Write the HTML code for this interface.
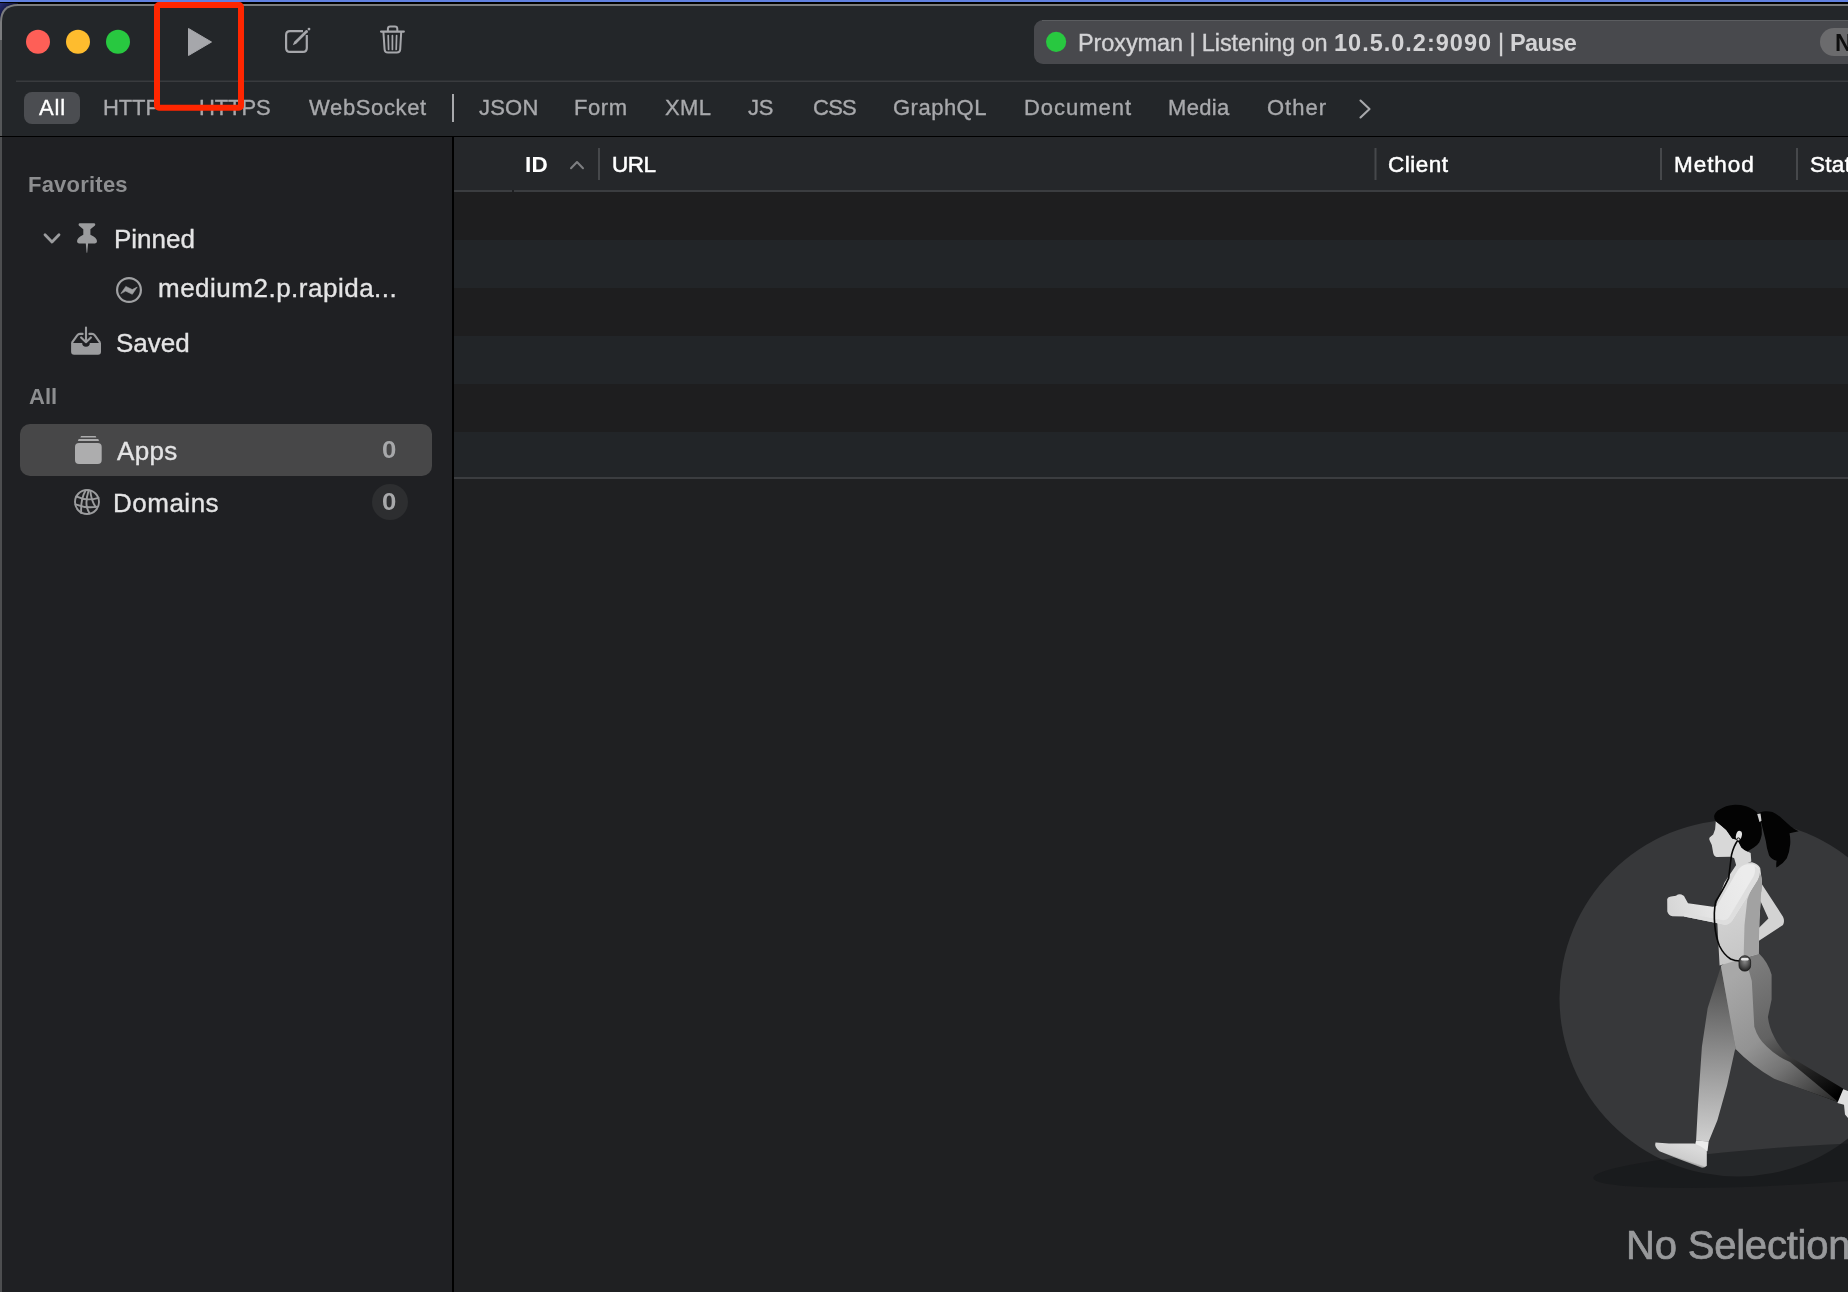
<!DOCTYPE html>
<html><head><meta charset="utf-8">
<style>
html,body{margin:0;padding:0;}
body{width:1848px;height:1292px;overflow:hidden;position:relative;background:#0b0d24;font-family:"Liberation Sans",sans-serif;}
.full{position:absolute;left:0;top:0;}
.t{position:absolute;white-space:nowrap;will-change:transform;}
</style></head>
<body>

<svg class="full" width="1848" height="1292" viewBox="0 0 1848 1292">
 <!-- desktop strip + window frame -->
 <rect x="0" y="0" width="1848" height="2" fill="#6080e0"/>
 <rect x="0" y="2" width="1848" height="3" fill="#000"/>
 <defs><linearGradient id="gCorner" x1="0" y1="4" x2="12" y2="16" gradientUnits="userSpaceOnUse"><stop offset="0" stop-color="#262c70"/><stop offset="0.6" stop-color="#10133a"/><stop offset="1" stop-color="#000"/></linearGradient></defs>
 <rect x="0" y="3" width="18" height="20" fill="url(#gCorner)"/>
 <path d="M0,1292 V22 Q0,4 18,4 H1848 V1292 Z" fill="#7b7c7e"/>
 <path d="M2,1292 V22 Q2,6 18,6 H1848 V1292 Z" fill="#232629"/>
 <rect x="0" y="40" width="2" height="1252" fill="#555759"/>
 <!-- traffic lights -->
 <circle cx="38" cy="41.8" r="12" fill="#fe5f57"/>
 <circle cx="78" cy="41.8" r="12" fill="#febc2e"/>
 <circle cx="118" cy="41.8" r="12" fill="#28c840"/>
 <!-- play -->
 <path d="M188.5,28.5 L211.5,42 L188.5,55.5 Z" fill="#a6a7ab" stroke="#a6a7ab" stroke-width="1" stroke-linejoin="round"/>
 <!-- edit -->
 <path d="M303,31.2 H290 Q286.1,31.2 286.1,35.1 V47.9 Q286.1,51.8 290,51.8 H302.9 Q306.8,51.8 306.8,47.9 V35" fill="none" stroke="#a6a7ab" stroke-width="2.2"/>
 <path d="M292.8,45.2 L294.2,41.8 L305.8,30.2 Q306.7,29.6 307.6,30.4 Q308.3,31.3 307.7,32.2 L296.2,43.8 Z" fill="#a6a7ab"/>
 <circle cx="309" cy="29.1" r="1.4" fill="#a6a7ab"/>
 <!-- trash -->
 <path d="M381,31.6 H403.9" stroke="#a6a7ab" stroke-width="2.1" stroke-linecap="round"/>
 <path d="M387.9,31.6 V28.8 Q387.9,26.4 390.3,26.4 H394.9 Q397.3,26.4 397.3,28.8 V31.6" fill="none" stroke="#a6a7ab" stroke-width="2"/>
 <path d="M383.4,32 L384.6,49.5 Q384.8,52.6 388,52.6 H396.8 Q400,52.6 400.2,49.5 L401.2,32" fill="none" stroke="#a6a7ab" stroke-width="2"/>
 <path d="M388.2,35.5 L388.6,49.5 M392.4,35.5 V49.5 M396.6,35.5 L396.2,49.5" stroke="#a6a7ab" stroke-width="1.7" stroke-linecap="round"/>
 <!-- toolbar separator -->
 <rect x="16" y="80.5" width="1832" height="1.5" fill="#393b3e"/>
 <!-- All pill -->
 <rect x="24" y="92" width="56" height="32" rx="8" fill="#4b4d51"/>
 <!-- vertical bar -->
 <rect x="452" y="94" width="2" height="28" fill="#a8a9ac"/>
 <!-- chevron right -->
 <path d="M1360.5,100.5 L1369.5,109 L1360.5,117.5" fill="none" stroke="#a8a9ac" stroke-width="2.1" stroke-linecap="round" stroke-linejoin="round"/>
 <!-- status pill -->
 <rect x="1034" y="20" width="900" height="44" rx="9" fill="#48494d"/>
 <rect x="1042" y="20" width="806" height="1" fill="#5b5d60"/>
 <circle cx="1056.1" cy="41.8" r="10.1" fill="#28c840"/>
 <rect x="1820" y="28" width="80" height="28" rx="14" fill="#6b6b6d"/>
 <!-- toolbar bottom black line -->
 <rect x="0" y="136" width="1848" height="1" fill="#000"/>
 <!-- sidebar -->
 <rect x="2" y="137" width="450" height="1155" fill="#1f2023"/>
 <rect x="0" y="137" width="2" height="1155" fill="#4d4e50"/>
 <rect x="452" y="137" width="2" height="1155" fill="#000"/>
 <!-- chevron down -->
 <path d="M45,234.8 L52,242 L59,234.8" fill="none" stroke="#9b9c9e" stroke-width="2.8" stroke-linecap="round" stroke-linejoin="round"/>
 <!-- pin -->
 <path d="M79.5,223.3 H94.3 Q96,223.5 95,225.6 L90.4,229.2 V234.7 Q96.9,237.6 97,241.3 Q97,243.4 95,243.4 H88.1 L87.2,252.7 H86.6 L85.8,243.4 H79 Q77,243.4 77,241.3 Q77.2,237.6 83.3,234.7 V229.2 L78.8,225.6 Q78,223.5 79.5,223.3 Z" fill="#9b9c9e"/>
 <!-- circle wave -->
 <circle cx="129" cy="290" r="11.9" fill="none" stroke="#a0a1a3" stroke-width="2.2"/>
 <path d="M120.9,293.6 L125.8,286.4 L132.3,289.6 L137.2,287.1 L132.3,294.3 L125.7,291.1 Z" fill="#a0a1a3" stroke="#a0a1a3" stroke-width="0.6" stroke-linejoin="round"/>
 <!-- saved tray -->
 <path d="M86,327.5 V341.5 M81.1,337.4 L86,342.2 L90.9,337.4" fill="none" stroke="#9b9c9e" stroke-width="2.1" stroke-linecap="round" stroke-linejoin="round"/>
 <path d="M82.6,333.9 H80 Q78.3,333.9 77.2,335.3 L72.2,342.4 M89.4,333.9 H92 Q93.7,333.9 94.8,335.3 L99.8,342.4" fill="none" stroke="#9b9c9e" stroke-width="2.1" stroke-linecap="round"/>
 <path d="M71.1,342.9 H82.2 A3.8,3.8 0 0 0 89.8,342.9 H101 V351.8 Q101,354.8 98,354.8 H74.1 Q71.1,354.8 71.1,351.8 Z" fill="#9b9c9e"/>
 <!-- apps selection -->
 <rect x="20" y="424" width="412" height="52" rx="10" fill="#474748"/>
 <path d="M81,435.9 H95.7 L96.3,437.6 H80.4 Z" fill="#adadae"/>
 <path d="M78.6,439.1 H98.3 L99,441 H77.9 Z" fill="#adadae"/>
 <rect x="75" y="442.9" width="26.7" height="21.2" rx="4" fill="#adadae"/>
 <!-- domains badge -->
 <circle cx="390" cy="502" r="18" fill="#2d2e30"/>
 <!-- globe -->
 <g fill="none" stroke="#9b9c9e" stroke-width="1.9" stroke-linecap="round">
  <circle cx="87" cy="502" r="12"/>
  <path d="M76.2,496.4 Q86.5,501.5 98.5,497.8"/>
  <path d="M75.5,504.3 Q86.5,508.6 97.3,506.6"/>
  <path d="M85.6,490.6 Q80.5,499 81.2,513"/>
  <path d="M88.6,490.5 Q85.6,500 86.8,506.5 Q87.5,510 89.5,513.2"/>
  <path d="M90.4,491 Q91,500 95.6,507"/>
 </g>
 <!-- content -->
 <rect x="454" y="137" width="1394" height="1155" fill="#1f2022"/>
 <rect x="454" y="137" width="1394" height="53" fill="#25272a"/>
 <rect x="454" y="190" width="58" height="2" fill="#3b3d40"/>
 <rect x="514" y="190" width="1334" height="2" fill="#3b3d40"/>
 <rect x="454" y="192" width="1394" height="48" fill="#1e1e1f"/><rect x="454" y="240" width="1394" height="48" fill="#222528"/><rect x="454" y="288" width="1394" height="48" fill="#1e1e1f"/><rect x="454" y="336" width="1394" height="48" fill="#222528"/><rect x="454" y="384" width="1394" height="48" fill="#1e1e1f"/><rect x="454" y="432" width="1394" height="45" fill="#222528"/>
 <rect x="454" y="477" width="1394" height="2" fill="#3b3d40"/>
 <!-- header dividers -->
 <rect x="598" y="148" width="2" height="32" fill="#46484b"/>
 <rect x="1374.5" y="148" width="2" height="32" fill="#46484b"/>
 <rect x="1660" y="148" width="2" height="32" fill="#46484b"/>
 <rect x="1796" y="148" width="2" height="32" fill="#46484b"/>
 <!-- sort caret -->
 <path d="M571,168.3 L577,162 L583,168.3" fill="none" stroke="#7e7f82" stroke-width="2" stroke-linecap="round" stroke-linejoin="round"/>
  <defs>
  <linearGradient id="gLegF" x1="1705" y1="975" x2="1700" y2="1140" gradientUnits="userSpaceOnUse">
   <stop offset="0" stop-color="#4e4e4e"/><stop offset="0.45" stop-color="#8a8a8a"/><stop offset="1" stop-color="#cfcfcf"/>
  </linearGradient>
  <linearGradient id="gLegR" x1="1760" y1="960" x2="1843" y2="1092" gradientUnits="userSpaceOnUse">
   <stop offset="0" stop-color="#7c7c7c"/><stop offset="0.45" stop-color="#626262"/><stop offset="0.7" stop-color="#2c2c2c"/><stop offset="1" stop-color="#000"/>
  </linearGradient>
  <linearGradient id="gLegR2" x1="1735" y1="975" x2="1840" y2="1100" gradientUnits="userSpaceOnUse">
   <stop offset="0" stop-color="#a8a8a8"/><stop offset="0.4" stop-color="#939393"/><stop offset="0.62" stop-color="#747474"/><stop offset="1" stop-color="#262626"/>
  </linearGradient>
  <linearGradient id="gShade" x1="1760" y1="960" x2="1845" y2="1095" gradientUnits="userSpaceOnUse">
   <stop offset="0" stop-color="#6e6e6e"/><stop offset="0.5" stop-color="#3a3a3a"/><stop offset="1" stop-color="#000"/>
  </linearGradient>
  <linearGradient id="gArm" x1="1668" y1="905" x2="1745" y2="880" gradientUnits="userSpaceOnUse"><stop offset="0" stop-color="#d6d6d6"/><stop offset="0.5" stop-color="#e6e6e6"/><stop offset="1" stop-color="#ececec"/></linearGradient>
  <linearGradient id="gShirt" x1="1720" y1="870" x2="1760" y2="960" gradientUnits="userSpaceOnUse">
   <stop offset="0" stop-color="#dcdcdc"/><stop offset="1" stop-color="#c4c4c4"/>
  </linearGradient>
  <linearGradient id="gShoe" x1="1684" y1="1145" x2="1678" y2="1163" gradientUnits="userSpaceOnUse">
   <stop offset="0" stop-color="#dadada"/><stop offset="0.7" stop-color="#cdcdcd"/><stop offset="0.85" stop-color="#8a8a8a"/><stop offset="1" stop-color="#2a2a2a"/>
  </linearGradient>
  <radialGradient id="gMp3" cx="0.5" cy="0.35" r="0.7">
   <stop offset="0" stop-color="#8a8a8a"/><stop offset="0.5" stop-color="#555"/><stop offset="1" stop-color="#1a1a1a"/>
  </radialGradient>
 </defs>
 <circle cx="1738" cy="998" r="178.5" fill="#37383a"/>
 <ellipse cx="1805" cy="1165" rx="212" ry="19" transform="rotate(-3.5 1805 1165)" fill="#141517" opacity="0.5"/>
 <!-- far leg (down to front shoe) -->
 <path d="M1721.3,965.5 L1756.1,953.9 L1752.2,1017.7 L1734.8,1050.6 L1727.1,1085.5 L1717.4,1120.3 L1708.7,1141.6 L1696.1,1140.6 L1698,1104.8 L1701.9,1046.7 L1707.7,1008 Z" fill="url(#gLegF)"/>
 <!-- sock + front shoe -->
 <path d="M1696.1,1140.6 L1708.7,1141.6 L1707.5,1151.2 L1694.2,1148.3 Z" fill="#ececec"/>
 <path d="M1655.5,1142.5 Q1662,1142.8 1669,1143.5 L1694.2,1143.5 Q1702,1146 1706.8,1151.2 L1706.8,1165.7 Q1704.5,1168 1701.9,1167.7 L1678.7,1159 L1659.4,1151.2 Q1654,1147 1655.5,1142.5 Z" fill="url(#gShoe)"/>
 <!-- rear leg -->
 <path d="M1720.9,966.1 L1759.2,953.7 Q1768,962 1771.6,974.8 L1771.6,999.5 L1767.9,1016.9 Q1769,1027 1774.1,1036.7 Q1779,1047 1787.7,1055.2 L1843.4,1088.7 L1838.5,1102.3 L1774.1,1078.8 Q1752,1066 1735.7,1049 Z" fill="url(#gLegR)"/>
 <path d="M1720.9,966.1 L1743.1,950 L1751.8,981 L1754.3,1026.8 Q1758,1039 1766.7,1046.6 Q1776,1056 1790,1062 L1838.5,1102.3 L1774.1,1078.8 Q1752,1066 1735.7,1049 Z" fill="url(#gLegR2)"/>
 <path d="M1843.2,1089.3 L1848,1091 L1848,1118 L1845,1114.5 L1844,1104.8 L1837.4,1102.9 Z" fill="#dedede"/>
 <!-- back arm -->
 <path d="M1761.9,884.2 L1783,916.7 Q1785,921 1783,924.9 L1758.6,941.1 L1757,929.7 L1768.4,918.4 L1760.2,900.5 Z" fill="#d3d3d3"/>
 <!-- shirt -->
 <path d="M1737.5,863.1 L1752.1,862.3 Q1758,864 1760.2,868 L1761.9,881 L1759.4,920 L1758.6,954.1 L1719.6,965.5 L1718,936.2 L1716.4,903.7 L1724.5,882.6 Z" fill="url(#gShirt)"/>
 <path d="M1758,871 Q1761.5,874 1761.9,881 L1759.4,920 L1758.6,954.1 L1743.6,958 L1744.5,925 L1747.3,899.6 Z" fill="#a2a2a2"/>
 <!-- front arm -->
 <path d="M1752.9,864.3 Q1758.5,865.5 1759.6,871.5 Q1759.8,876 1757.5,880 L1733.5,918.5 Q1730.5,924.5 1725,924.7 L1684,916.5 L1672.5,916.3 Q1668.5,915.5 1667.3,911.5 L1667.2,899 Q1668,896.5 1671,896.4 L1676,895.8 Q1678.5,893.8 1681.5,894.6 Q1684.5,895.5 1685.6,899 L1688,903.3 L1711,906.5 Q1715.5,907.5 1717.8,904.5 L1737,871.5 Q1741,865 1747,864.3 Z" fill="url(#gArm)"/>
 <path d="M1757.5,880 L1733.5,918.5 Q1730.5,924.5 1725,924.7 L1684,916.5 L1684.5,913 L1723,920.3 Q1727,920.5 1729.5,916.5 L1753.5,876.5 Q1756,871.5 1754.5,866 Q1759.5,868.5 1759.6,871.5 Q1759.8,876 1757.5,880 Z" fill="#dedede"/>
 <!-- neck + face -->
 <path d="M1715.8,821.3 L1721.7,825.9 L1726.3,829.9 L1732.2,838.4 L1736.8,839.7 L1738.8,842.4 L1741.4,847.6 L1747.4,851.6 L1750.7,852.9 L1751.3,861.4 L1736.8,867.4 L1734.2,858.2 L1730.9,856.8 L1716.5,856.9 Q1714,856.5 1713.2,852.9 L1711.8,845 L1709.9,841.1 Q1708.6,838.8 1709.6,837.6 L1713.2,834.5 L1715.1,829.2 Z" fill="#d8d8d8"/>
 <!-- hair -->
 <path d="M1714.1,816.1 Q1715.5,811 1719.7,809.5 Q1726,805.2 1732.9,804.9 Q1740,804.6 1746.1,806.2 Q1753,808.5 1756.6,812.1 Q1759.8,816 1760.5,821.3 Q1762.2,828 1761.8,834.5 Q1761,839 1759.2,842.4 Q1757,845.5 1753.9,847.6 L1747.4,851.6 Q1743.5,850 1741.4,847.6 L1738.8,842.4 L1736.8,839.7 L1732.2,838.4 L1726.3,829.9 L1721.7,825.9 L1715.8,821.3 Q1714,819 1714.1,816.1 Z" fill="#030303"/>
 <path d="M1757.9,813.4 Q1760,811.8 1763.2,811.4 Q1768,811 1772.4,812.1 Q1777.5,814.5 1782.2,818.7 L1790.8,826.6 Q1794.5,829.6 1798.7,831.2 L1789.5,833.2 Q1790.6,838.5 1790.2,844.3 Q1789.6,852 1786.8,858.2 Q1782.5,864.5 1776.3,867.4 Q1776,864 1776.6,860.8 Q1771.5,859.3 1769.1,855.5 Q1766.6,848.5 1765.8,841.1 L1761.2,822.6 Z" fill="#030303"/>
 <path d="M1757.2,814.1 L1760.5,813.4 L1761.5,820.7 L1759.5,822 Z" fill="#d0d0d0"/>
 <ellipse cx="1738.9" cy="835.4" rx="2.9" ry="4.6" transform="rotate(15 1738.9 835.4)" fill="#e3e3e3"/>
 <!-- earphone cable + mp3 -->
 <path d="M1738.2,839.7 Q1733.5,846 1731.5,855 Q1730,866 1728.7,878.2 Q1722,892 1715.7,901.4 Q1713.5,912 1714.8,925.6 Q1715.8,937 1719.5,946 Q1724,955 1730.6,959 Q1735,961 1740,961" fill="none" stroke="#080808" stroke-width="1.6"/>
 <circle cx="1738.4" cy="839.4" r="1.5" fill="#d8d8d8" stroke="#111" stroke-width="1"/>
 <rect x="1739" y="955.8" width="11.6" height="15.3" rx="5.5" fill="url(#gMp3)" stroke="#1a1a1a" stroke-width="0.8"/><rect x="1741" y="958" width="7.6" height="2.4" rx="1.2" fill="#e8e8e8"/>

</svg>

<div class="t" style="left:38.68px;top:93px;font-size:22px;line-height:30px;font-weight:400;color:#fff;letter-spacing:0.8px;-webkit-text-stroke:0.35px #fff;">All</div><div class="t" style="left:103px;top:93px;font-size:22px;line-height:30px;font-weight:400;color:#a8a9ac;letter-spacing:-0.125px;-webkit-text-stroke:0.35px #a8a9ac;">HTTP</div><div class="t" style="left:199px;top:93px;font-size:22px;line-height:30px;font-weight:400;color:#a8a9ac;letter-spacing:-0.125px;-webkit-text-stroke:0.35px #a8a9ac;">HTTPS</div><div class="t" style="left:309.32px;top:93px;font-size:22px;line-height:30px;font-weight:400;color:#a8a9ac;letter-spacing:0.64px;-webkit-text-stroke:0.35px #a8a9ac;">WebSocket</div><div class="t" style="left:478.64px;top:93px;font-size:22px;line-height:30px;font-weight:400;color:#a8a9ac;letter-spacing:0.22px;-webkit-text-stroke:0.35px #a8a9ac;">JSON</div><div class="t" style="left:574.44px;top:93px;font-size:22px;line-height:30px;font-weight:400;color:#a8a9ac;letter-spacing:0.594px;-webkit-text-stroke:0.35px #a8a9ac;">Form</div><div class="t" style="left:664.64px;top:93px;font-size:22px;line-height:30px;font-weight:400;color:#a8a9ac;letter-spacing:0.4px;-webkit-text-stroke:0.35px #a8a9ac;">XML</div><div class="t" style="left:748.36px;top:93px;font-size:22px;line-height:30px;font-weight:400;color:#a8a9ac;letter-spacing:-0.3px;-webkit-text-stroke:0.35px #a8a9ac;">JS</div><div class="t" style="left:812.64px;top:93px;font-size:22px;line-height:30px;font-weight:400;color:#a8a9ac;letter-spacing:-0.74px;-webkit-text-stroke:0.35px #a8a9ac;">CSS</div><div class="t" style="left:893.32px;top:93px;font-size:22px;line-height:30px;font-weight:400;color:#a8a9ac;letter-spacing:0.494px;-webkit-text-stroke:0.35px #a8a9ac;">GraphQL</div><div class="t" style="left:1023.8px;top:93px;font-size:22px;line-height:30px;font-weight:400;color:#a8a9ac;letter-spacing:0.978px;-webkit-text-stroke:0.35px #a8a9ac;">Document</div><div class="t" style="left:1167.96px;top:93px;font-size:22px;line-height:30px;font-weight:400;color:#a8a9ac;letter-spacing:0.32px;-webkit-text-stroke:0.35px #a8a9ac;">Media</div><div class="t" style="left:1267.36px;top:93px;font-size:22px;line-height:30px;font-weight:400;color:#a8a9ac;letter-spacing:1.0px;-webkit-text-stroke:0.35px #a8a9ac;">Other</div><div class="t" style="left:1078px;top:28px;font-size:23.5px;line-height:30px;font-weight:400;color:#d3d3d5;letter-spacing:-0.1px;-webkit-text-stroke:0.35px #d3d3d5;">Proxyman | Listening on</div><div class="t" style="left:1334px;top:28px;font-size:23.5px;line-height:30px;font-weight:700;color:#d3d3d5;letter-spacing:1.0px;">10.5.0.2:9090</div><div class="t" style="left:1498px;top:28px;font-size:23.5px;line-height:30px;font-weight:400;color:#d3d3d5;letter-spacing:0px;-webkit-text-stroke:0.35px #d3d3d5;">|</div><div class="t" style="left:1510px;top:28px;font-size:23.5px;line-height:30px;font-weight:700;color:#d3d3d5;letter-spacing:-0.6px;">Pause</div><div class="t" style="left:1835px;top:28px;font-size:23.5px;line-height:30px;font-weight:700;color:#0e0e0e;letter-spacing:0px;">N</div><div class="t" style="left:28px;top:170px;font-size:22px;line-height:30px;font-weight:700;color:#8d8e90;letter-spacing:0.22px;">Favorites</div><div class="t" style="left:114px;top:223px;font-size:26px;line-height:32px;font-weight:400;color:#e4e4e5;letter-spacing:0px;-webkit-text-stroke:0.35px #e4e4e5;">Pinned</div><div class="t" style="left:158px;top:272px;font-size:26px;line-height:32px;font-weight:400;color:#e4e4e5;letter-spacing:0.5px;-webkit-text-stroke:0.35px #e4e4e5;">medium2.p.rapida...</div><div class="t" style="left:116px;top:327px;font-size:26px;line-height:32px;font-weight:400;color:#e4e4e5;letter-spacing:0px;-webkit-text-stroke:0.35px #e4e4e5;">Saved</div><div class="t" style="left:29px;top:382px;font-size:22px;line-height:30px;font-weight:700;color:#8d8e90;letter-spacing:0px;">All</div><div class="t" style="left:117px;top:435px;font-size:26px;line-height:32px;font-weight:400;color:#e4e4e5;letter-spacing:0.3px;-webkit-text-stroke:0.35px #e4e4e5;">Apps</div><div class="t" style="left:382px;top:434px;font-size:23px;line-height:32px;font-weight:700;color:#a7a8aa;letter-spacing:0px;transform:scaleX(1.12);transform-origin:0 0;">0</div><div class="t" style="left:113px;top:487px;font-size:26px;line-height:32px;font-weight:400;color:#e4e4e5;letter-spacing:0.5px;-webkit-text-stroke:0.35px #e4e4e5;">Domains</div><div class="t" style="left:382px;top:486px;font-size:23px;line-height:32px;font-weight:700;color:#a7a8aa;letter-spacing:0px;transform:scaleX(1.12);transform-origin:0 0;">0</div><div class="t" style="left:525px;top:149px;font-size:22.5px;line-height:32px;font-weight:700;color:#fff;letter-spacing:0.3px;">ID</div><div class="t" style="left:612px;top:149px;font-size:22.5px;line-height:32px;font-weight:400;color:#fff;letter-spacing:-0.5px;-webkit-text-stroke:0.5px #fff;">URL</div><div class="t" style="left:1388px;top:149px;font-size:22.5px;line-height:32px;font-weight:400;color:#fff;letter-spacing:0.5px;-webkit-text-stroke:0.5px #fff;">Client</div><div class="t" style="left:1674px;top:149px;font-size:22.5px;line-height:32px;font-weight:400;color:#fff;letter-spacing:0.95px;-webkit-text-stroke:0.5px #fff;">Method</div><div class="t" style="left:1810px;top:149px;font-size:22.5px;line-height:32px;font-weight:400;color:#fff;letter-spacing:0.3px;-webkit-text-stroke:0.5px #fff;">Status</div><div class="t" style="left:1626px;top:1219px;font-size:40px;line-height:52px;font-weight:400;color:#98999b;letter-spacing:-0.2px;-webkit-text-stroke:0.7px #98999b;">No Selection</div>
<svg class="full" width="1848" height="1292" viewBox="0 0 1848 1292"><rect x="157" y="5" width="84" height="102.7" rx="2" fill="none" stroke="#ff2600" stroke-width="6"/></svg>
</body></html>
